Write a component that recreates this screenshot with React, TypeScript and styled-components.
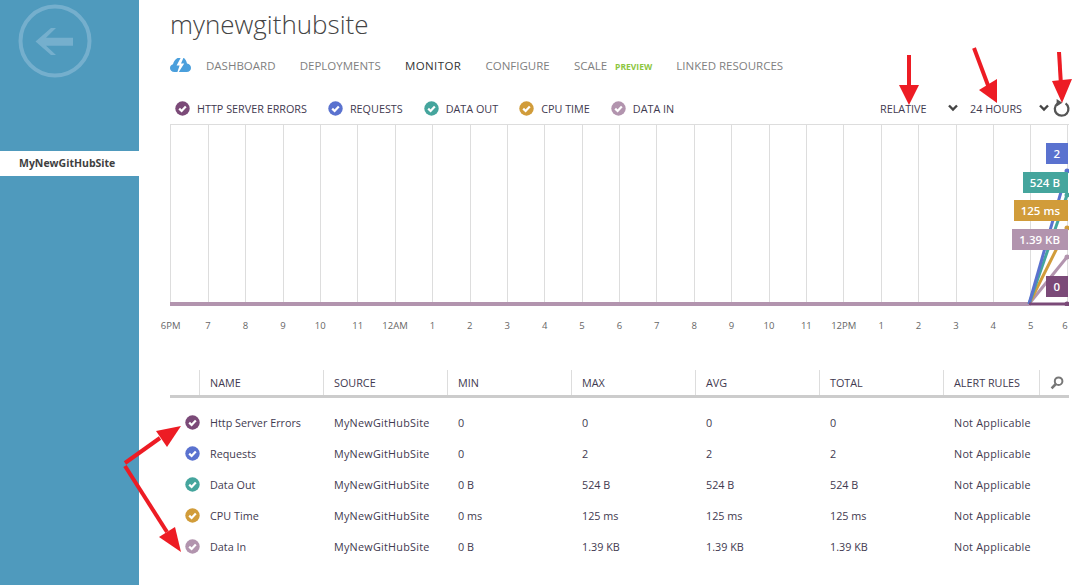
import styled, { createGlobalStyle } from 'styled-components';

const GlobalStyle = createGlobalStyle`
  html, body {
    margin: 0;
    padding: 0;
    background: #fff;
    font-family: 'Open Sans', 'Liberation Sans', sans-serif;
  }
`;

const cores = {
  erros: '#7b4a78',
  requests: '#5a72cf',
  dataOut: '#45a59d',
  cpu: '#d19c3a',
  dataIn: '#b294ae',
};

const legenda = [
  { nome: 'HTTP SERVER ERRORS', cor: cores.erros },
  { nome: 'REQUESTS', cor: cores.requests },
  { nome: 'DATA OUT', cor: cores.dataOut },
  { nome: 'CPU TIME', cor: cores.cpu },
  { nome: 'DATA IN', cor: cores.dataIn },
];

const abas = ['DASHBOARD', 'DEPLOYMENTS', 'MONITOR', 'CONFIGURE', 'SCALE', 'LINKED RESOURCES'];
const horas = ['6PM', '7', '8', '9', '10', '11', '12AM', '1', '2', '3', '4', '5', '6', '7', '8', '9', '10', '11', '12PM', '1', '2', '3', '4', '5', '6'];
const colunas = ['NAME', 'SOURCE', 'MIN', 'MAX', 'AVG', 'TOTAL', 'ALERT RULES'];

const linhas = [
  { cor: cores.erros, nome: 'Http Server Errors', min: '0', max: '0', avg: '0', total: '0' },
  { cor: cores.requests, nome: 'Requests', min: '0', max: '2', avg: '2', total: '2' },
  { cor: cores.dataOut, nome: 'Data Out', min: '0 B', max: '524 B', avg: '524 B', total: '524 B' },
  { cor: cores.cpu, nome: 'CPU Time', min: '0 ms', max: '125 ms', avg: '125 ms', total: '125 ms' },
  { cor: cores.dataIn, nome: 'Data In', min: '0 B', max: '1.39 KB', avg: '1.39 KB', total: '1.39 KB' },
];

const series = [
  { cor: cores.dataIn, y: 133, valor: '1.39 KB', topo: 104 },
  { cor: cores.cpu, y: 104, valor: '125 ms', topo: 75 },
  { cor: cores.dataOut, y: 71, valor: '524 B', topo: 47 },
  { cor: cores.requests, y: 47, valor: '2', topo: 18 },
  { cor: cores.erros, y: 180, valor: '0', topo: 151 },
];

function Check({ cor }: { cor: string }) {
  return (
    <IconeCheck width="15" height="15" viewBox="0 0 15 15">
      <circle cx="7.5" cy="7.5" r="7.2" fill={cor} />
      <path d="M4.2 7.6 L6.6 10 L10.8 5.4" fill="none" stroke="#fff" strokeWidth="2.2" />
    </IconeCheck>
  );
}

function Chevron() {
  return (
    <svg width="12" height="8" viewBox="0 0 12 8">
      <path d="M2 1.5 L6 5.5 L10 1.5" fill="none" stroke="#444" strokeWidth="2.4" />
    </svg>
  );
}

export default function App() {
  return (
    <Pagina>
      <GlobalStyle />
      <Sidebar>
        <BotaoVoltar width="74" height="74" viewBox="0 0 74 74">
          <circle cx="37" cy="37" r="34.5" fill="none" stroke="#75afcd" strokeWidth="4" />
          <path d="M17.5 37.5 L33 24 H38 L28 33.7 H55 V41.7 H28 L38 51 H33 Z" fill="#75afcd" />
        </BotaoVoltar>
        <ItemSelecionado>MyNewGitHubSite</ItemSelecionado>
      </Sidebar>

      <Conteudo>
        <Titulo>mynewgithubsite</Titulo>
        <Abas>
          <svg width="21" height="14" viewBox="0 0 21 14">
            <path d="M4.6 14 C1.6 14 0 12.2 0 10 C0 7.9 1.5 6.6 3 6.3 C3.6 3.4 5.4 1 7.6 0 L10 0 H14 C15.6 1.4 16.6 3.2 17 5.6 C19.4 6 21 7.6 21 10 C21 12.2 19.4 14 16.6 14 Z" fill="#4a9fdc" />
            <path d="M10.6 0 L6.6 7.6 H9.6 L7.4 14 H8.8 L14.2 5.6 H11 L13.4 0 Z" fill="#fff" />
          </svg>
          <ListaAbas>
            {abas.map((aba) => (
              <Aba key={aba} $ativa={aba === 'MONITOR'}>
                {aba}
                {aba === 'SCALE' && <Preview>PREVIEW</Preview>}
              </Aba>
            ))}
          </ListaAbas>
        </Abas>

        <BarraFiltros>
          <Legenda>
            {legenda.map((item) => (
              <ItemLegenda key={item.nome}>
                <Check cor={item.cor} />
                {item.nome}
              </ItemLegenda>
            ))}
          </Legenda>
          <Seletor $largura={90} $folga={11}>RELATIVE <Chevron /></Seletor>
          <Seletor $largura={82} $folga={2}>24 HOURS <Chevron /></Seletor>
          <Atualizar width="18" height="18" viewBox="0 0 18 18">
            <path d="M5.4 4.6 A6.8 6.8 0 1 0 13.6 4.4" fill="none" stroke="#555" strokeWidth="2.3" />
            <path d="M4.6 0 L10.4 3.8 L4.6 7.6 Z" fill="#555" />
          </Atualizar>
        </BarraFiltros>

        <Grafico>
          {Array.from({ length: 24 }, (_, i) => (
            <Coluna key={i} />
          ))}
          <SerieSvg width="899" height="182" viewBox="0 0 899 182">
            <path d="M0 180 H859" stroke={cores.dataIn} strokeWidth="4" fill="none" />
            {series.map((s) => (
              <g key={s.valor}>
                <path d={`M859 180 L897 ${s.y}`} stroke={s.cor} strokeWidth="3" fill="none" />
                <circle cx="897" cy={s.y} r="2.5" fill={s.cor} />
              </g>
            ))}
          </SerieSvg>
          {series.map((s) => (
            <Etiqueta key={s.valor} $cor={s.cor} $topo={s.topo}>
              {s.valor}
            </Etiqueta>
          ))}
        </Grafico>

        <EixoHoras>
          {horas.map((hora, i) => (
            <Hora key={i}>{hora}</Hora>
          ))}
        </EixoHoras>

        <Tabela>
          <LinhaCabecalho>
            <span />
            {colunas.map((coluna) => (
              <CelulaCabecalho key={coluna}>{coluna}</CelulaCabecalho>
            ))}
            <CelulaCabecalho>
              <svg width="14" height="14" viewBox="0 0 14 14">
                <circle cx="8.6" cy="5.2" r="3.8" fill="none" stroke="#777" strokeWidth="2" />
                <path d="M5.8 8 L1.6 12.4" stroke="#777" strokeWidth="2.6" />
              </svg>
            </CelulaCabecalho>
          </LinhaCabecalho>
          <CorpoTabela>
            {linhas.map((linha) => (
              <Linha key={linha.nome}>
                <CelulaCheck>
                  <Check cor={linha.cor} />
                </CelulaCheck>
                <Celula>{linha.nome}</Celula>
                <CelulaFonte>MyNewGitHubSite</CelulaFonte>
                <Celula>{linha.min}</Celula>
                <Celula>{linha.max}</Celula>
                <Celula>{linha.avg}</Celula>
                <Celula>{linha.total}</Celula>
                <CelulaFonte>Not Applicable</CelulaFonte>
              </Linha>
            ))}
          </CorpoTabela>
        </Tabela>
      </Conteudo>

      <Anotacoes width="1080" height="585" viewBox="0 0 1080 585">
        <g stroke="#ed1c24" strokeWidth="4" fill="#ed1c24">
          <path d="M909 55 V90" />
          <path d="M899 85 H919 L909 105 Z" stroke="none" />
          <path d="M974 48 L989 88" />
          <path d="M979 90 L997 79 L997 103 Z" stroke="none" />
          <path d="M1059 52 L1061 85" />
          <path d="M1052 81 L1072 79 L1062 103 Z" stroke="none" />
          <path d="M125 463 L160 438" />
          <path d="M156 431 L181 426 L167 447 Z" stroke="none" />
          <path d="M125 466 L167 532" />
          <path d="M159 537 L175 527 L181 552 Z" stroke="none" />
        </g>
      </Anotacoes>
    </Pagina>
  );
}

const Pagina = styled.div`
  position: relative;
  display: flex;
  width: 1080px;
  height: 585px;
  overflow: hidden;
`;

const Sidebar = styled.aside`
  flex: 0 0 139px;
  background: #4f9abd;
  display: flex;
  flex-direction: column;
`;

const BotaoVoltar = styled.svg`
  margin: 4px 0 0 18px;
`;

const ItemSelecionado = styled.div`
  margin-top: 73px;
  height: 25px;
  line-height: 25px;
  background: #fff;
  padding-left: 19px;
  font-size: 10.5px;
  font-weight: 700;
  color: #3f3f3f;
`;

const Conteudo = styled.main`
  flex: 1;
  padding-left: 31px;
`;

const Titulo = styled.h1`
  margin: 0;
  height: 48px;
  line-height: 48px;
  font-size: 26px;
  font-weight: 300;
  color: #444;
`;

const Abas = styled.nav`
  display: flex;
  align-items: center;
  height: 34px;
`;

const ListaAbas = styled.div`
  display: flex;
  gap: 24.2px;
  margin-left: 15px;
`;

const Aba = styled.span<{ $ativa: boolean }>`
  font-size: 11.5px;
  letter-spacing: ${({ $ativa }) => ($ativa ? '0.4px' : '0')};
  color: ${({ $ativa }) => ($ativa ? '#333' : '#7f7f7f')};
`;

const Preview = styled.span`
  margin-left: 8px;
  font-size: 8.5px;
  font-weight: 700;
  color: #8cc63f;
`;

const BarraFiltros = styled.div`
  display: flex;
  align-items: center;
  height: 20px;
  margin-top: 16px;
  width: 899px;
  font-size: 10.8px;
  color: #3f3a50;
`;

const Legenda = styled.div`
  display: flex;
  gap: 21px;
  margin-left: 5px;
  flex: 1;
`;

const ItemLegenda = styled.span`
  display: flex;
  align-items: center;
  gap: 7px;
`;

const IconeCheck = styled.svg`
  flex: none;
`;

const Seletor = styled.span<{ $largura: number; $folga: number }>`
  display: flex;
  align-items: center;
  justify-content: space-between;
  box-sizing: border-box;
  width: ${({ $largura }) => $largura}px;
  padding-right: ${({ $folga }) => $folga}px;
`;

const Atualizar = styled.svg`
  margin-right: -1px;
`;

const Grafico = styled.div`
  position: relative;
  display: grid;
  grid-template-columns: repeat(24, 37.4px);
  width: 899px;
  height: 182px;
  margin-top: 6px;
  box-sizing: border-box;
  padding-left: 0.4px;
  border-top: 1px solid #ddd;
`;

const Coluna = styled.div`
  border-left: 1px solid #ddd;

  &:nth-child(24) {
    border-right: 1px solid #ddd;
  }
`;

const SerieSvg = styled.svg`
  position: absolute;
  top: -1px;
  left: 0;
`;

const Etiqueta = styled.div<{ $cor: string; $topo: number }>`
  position: absolute;
  top: ${({ $topo }) => $topo}px;
  right: 1px;
  height: 21px;
  line-height: 21px;
  padding: 0 8px 0 7px;
  background: ${({ $cor }) => $cor};
  color: #fff;
  font-size: 11.5px;
  font-weight: 600;
`;

const EixoHoras = styled.div`
  display: grid;
  grid-template-columns: repeat(25, 37.4px);
  margin: 10px 0 0 -18px;
  height: 20px;
`;

const Hora = styled.span`
  font-size: 9.5px;
  line-height: 20px;
  text-align: center;
  color: #666;

  &:last-child {
    margin-right: 6px;
  }
`;

const Tabela = styled.section`
  margin-top: 34px;
  width: 899px;
  font-size: 10.8px;
  color: #3f3a50;
`;

const LinhaCabecalho = styled.div`
  display: grid;
  grid-template-columns: 29px 124px 124px 124px 124px 124px 124px 96px 30px;
  height: 25px;
  border-bottom: 3px solid #ccc;
`;

const CelulaCabecalho = styled.div`
  display: flex;
  align-items: center;
  box-sizing: border-box;
  padding-left: 10px;
  border-left: 1px solid #ddd;
`;

const CorpoTabela = styled.div`
  padding-top: 9px;
`;

const Linha = styled.div`
  display: grid;
  grid-template-columns: 29px 124px 124px 124px 124px 124px 124px 96px 30px;
  height: 31px;
  align-items: center;
`;

const CelulaCheck = styled.div`
  display: flex;
  padding-left: 15px;
`;

const Celula = styled.div`
  padding-left: 11px;
  white-space: nowrap;
`;

const CelulaFonte = styled(Celula)`
  letter-spacing: 0.25px;
`;

const Anotacoes = styled.svg`
  position: absolute;
  top: 0;
  left: 0;
  pointer-events: none;
`;
